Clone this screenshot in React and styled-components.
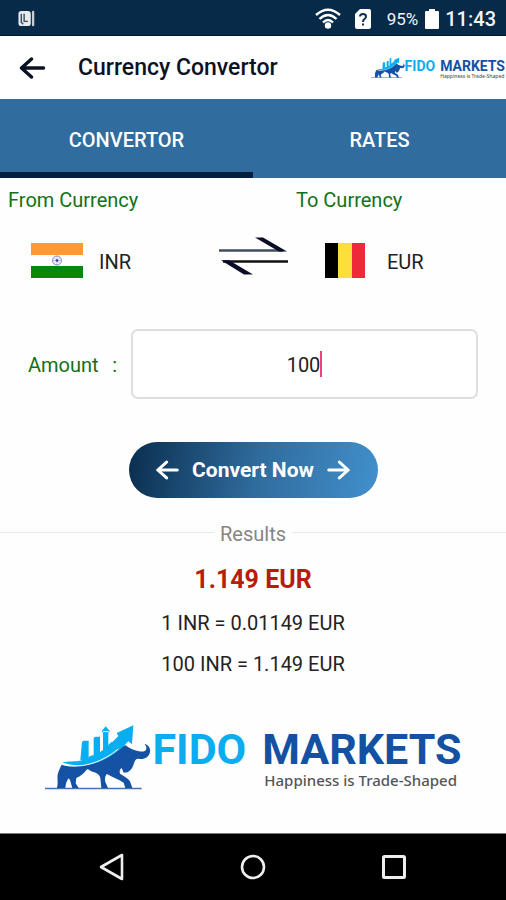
import React, { useState } from "react";
import styled, { createGlobalStyle } from "styled-components";

const GlobalStyle = createGlobalStyle`
  * {
    box-sizing: border-box;
  }

  body {
    margin: 0;
    background-color: #fefefe;
    font-family: Roboto, "Liberation Sans", sans-serif;
  }

  button {
    padding: 0;
    border: none;
    background: none;
    color: inherit;
    font: inherit;
    cursor: pointer;
  }
`;

const Screen = styled.div`
  display: flex;
  flex-direction: column;
  min-height: 100vh;
  background-color: #fefefe;
`;

const StatusBar = styled.div`
  display: flex;
  justify-content: space-between;
  align-items: center;
  height: 36px;
  padding: 2px 10px 0 17px;
  border-bottom: 1px solid #03182c;
  background-color: #062a48;
  color: #f2f5f7;
`;

const StatusIcons = styled.div`
  display: flex;
  align-items: center;
`;

const WifiIcon = styled.svg`
  margin-right: 14px;
`;

const SimIcon = styled.svg`
  margin-right: 16px;
`;

const BatteryLevel = styled.span`
  margin-right: 7px;
  font-size: 17px;
`;

const Clock = styled.span`
  margin-left: 6px;
  font-size: 20px;
  font-weight: 500;
`;

const Header = styled.header`
  display: flex;
  align-items: center;
  height: 63px;
  padding-left: 19px;
  background-color: white;
`;

const BackButton = styled.button`
  display: flex;
  margin-right: 32px;
`;

const Title = styled.h1`
  flex: 1;
  margin: 0;
  font-size: 23px;
  font-weight: 500;
  white-space: nowrap;
  color: #0c1226;
`;

const Tabs = styled.nav`
  display: flex;
  height: 79px;
  background-color: #306c9e;
`;

const Tab = styled.button`
  flex: 1;
  border-top: 8px solid transparent;
  border-bottom: 6px solid ${({ $active }) => ($active ? "#031f3b" : "transparent")};
  font-size: 20px;
  font-weight: 500;
  color: white;
`;

const Main = styled.main`
  flex: 1;
  display: flex;
  flex-direction: column;
`;

const Currencies = styled.section`
  display: grid;
  grid-template-columns: 1fr 70px 1fr;
  align-items: end;
  padding: 0 6px 0 8px;
`;

const Side = styled.div`
  padding-left: ${({ $indent }) => ($indent ? 7 : 0)}px;
`;

const SideLabel = styled.div`
  padding-top: 8px;
  font-size: 20px;
  line-height: 28px;
  color: #157015;
`;

const CurrencyButton = styled.button`
  display: flex;
  align-items: center;
  gap: 16px;
  height: 35px;
  margin-top: 29px;
  padding-left: 23px;
  font-size: 20px;
  color: #222;
`;

const CurrencyCode = styled.span`
  padding-top: 2px;
`;

const FlagBox = styled.span`
  display: flex;
  justify-content: center;
  width: 52px;
`;

const SwapButton = styled.button`
  display: flex;
  margin-bottom: 3px;
`;

const AmountRow = styled.div`
  display: flex;
  align-items: center;
  margin-top: 51px;
  padding: 0 28px;
`;

const AmountLabel = styled.label`
  display: flex;
  justify-content: space-between;
  width: 89px;
  margin-right: 14px;
  padding-top: 2px;
  font-size: 20px;
  color: #157015;
`;

const AmountField = styled.div`
  flex: 1;
  display: flex;
  justify-content: center;
  align-items: center;
  height: 70px;
  border: 2px solid #dedede;
  border-radius: 7px;
  background-color: white;
`;

const AmountInput = styled.input`
  width: ${({ $chars }) => $chars}ch;
  padding: 2px 0 0;
  border: none;
  outline: none;
  background: none;
  font-family: inherit;
  font-size: 20px;
  color: #222;
  caret-color: transparent;
`;

const Caret = styled.span`
  width: 2px;
  height: 26px;
  background-color: #f04080;
`;

const ConvertButton = styled.button`
  display: flex;
  align-items: center;
  justify-content: center;
  gap: 13px;
  align-self: center;
  width: 249px;
  height: 56px;
  margin-top: 43px;
  border-radius: 28px;
  background: linear-gradient(100deg, #0a2e4e 0%, #306c9e 52%, #4290cc 100%);
  font-size: 21px;
  font-weight: 700;
  color: white;
`;

const ResultsHeading = styled.h2`
  display: flex;
  align-items: center;
  gap: 6px;
  margin: 22px 0 0;
  font-size: 20px;
  font-weight: 400;
  line-height: 28px;
  color: #858585;

  &::before,
  &::after {
    content: "";
    flex: 1;
    height: 1px;
    margin-bottom: 4px;
    background-color: #e9e9e9;
  }
`;

const Total = styled.div`
  margin-top: 16px;
  font-size: 25px;
  font-weight: 700;
  line-height: 32px;
  text-align: center;
  color: #b91c08;
`;

const Rate = styled.p`
  margin: 13px 0 0;
  font-size: 20px;
  line-height: 28px;
  text-align: center;
  color: #222;
`;

const Brand = styled.div`
  display: flex;
  align-items: flex-start;
  gap: ${({ $small }) => ($small ? 0 : 2)}px;
  padding-right: ${({ $small }) => ($small ? 1 : 0)}px;
`;

const FooterBrand = styled.div`
  display: flex;
  justify-content: center;
  margin: 46px 0 39px;
`;

const BrandWords = styled.div`
  display: grid;
  grid-template-columns: auto auto;
  column-gap: ${({ $small }) => ($small ? 5 : 16)}px;
  padding-top: ${({ $small }) => ($small ? 2 : 4)}px;
  font-size: ${({ $small }) => ($small ? 14 : 43)}px;
  font-weight: 700;
  line-height: ${({ $small }) => ($small ? 14 : 43)}px;
`;

const Fido = styled.span`
  color: #0aaeee;
`;

const Markets = styled.span`
  color: #1451a3;
`;

const Tagline = styled.span`
  grid-column: 2;
  padding-left: ${({ $small }) => ($small ? 0 : 2)}px;
  font-family: "Noto Sans", "Liberation Sans", sans-serif;
  font-size: ${({ $small }) => ($small ? 5 : 15)}px;
  font-weight: 500;
  line-height: ${({ $small }) => ($small ? 6 : 18)}px;
  white-space: nowrap;
  color: #555;
`;

const NavBar = styled.nav`
  display: flex;
  justify-content: space-around;
  align-items: center;
  height: 67px;
  padding: 0 42px;
  border-top: 1px solid #777;
  background-color: black;
`;

const NavButton = styled.button`
  display: flex;
`;

const Bull = ({ width }) => (
  <svg width={width} viewBox="42 42 318 198" aria-hidden="true">
    <path d="M42 233h290v5H42z" fill="#4470b4" />
    <path
      d="M92 164C120 174 175 168 218 145C240 132 262 112 284 106C292 112 300 118 308 119C326 126 344 128 346 116C347 110 344 106 340 102C352 104 359 114 357 126C354 142 338 150 322 146C314 146 312 152 309 160C306 170 302 180 290 187L278 188L272 174C266 178 264 186 268 192C278 198 290 204 297 214L304 234H283L278 218C262 208 244 202 228 192C222 198 221 206 223 216L231 234H211L208 204C206 196 200 190 190 187C178 184 172 176 168 178C160 190 148 200 136 204L134 220L143 234H124L117 210L113 205C106 214 104 224 103 234H78C82 218 78 208 80 194C82 184 86 176 92 164Z"
      fill="#1552a4"
    />
    <path
      d="M94 157C110 154 134 156 153 151V96L158 92H173V144L188 139V84L193 80H207V131L216 124V68L212 64L224 49L237 64L232 68V109L262 78L257 69L307 46L303 103L292 94C266 124 226 152 184 162C150 169 116 167 94 157Z"
      fill="#08aef0"
    />
    <path d="M148 150L153 96V151L173 146V140L188 134V139L207 133V126L216 120V126L232 114V104L244 94V118L180 156Z" fill="#08aef0" />
    <path d="M110 167C164 174 218 153 262 117" fill="none" stroke="#fff" strokeWidth="3" />
    <path d="M216 65h17" stroke="#fff" strokeWidth="3" />
  </svg>
);

const Logo = ({ small }) => (
  <Brand $small={small}>
    <Bull width={small ? 34 : 106} />
    <BrandWords $small={small}>
      <Fido>FIDO</Fido>
      <Markets>MARKETS</Markets>
      <Tagline $small={small}>Happiness is Trade-Shaped</Tagline>
    </BrandWords>
  </Brand>
);

const Arrow = ({ width, height, color, right }) => (
  <svg width={width} height={height} viewBox="0 0 26 22" aria-hidden="true">
    <path
      d={right ? "M2 11H24M14 2L24 11L14 20" : "M24 11H2M12 2L2 11L12 20"}
      fill="none"
      stroke={color}
      strokeWidth="3.400"
      strokeLinecap="round"
      strokeLinejoin="round"
    />
  </svg>
);

const IndiaFlag = () => (
  <svg width="52" height="35" viewBox="0 0 52 35" aria-hidden="true">
    <path d="M0 0h52v35H0z" fill="#fff" />
    <path d="M0 0h52v12H0z" fill="#ff9933" />
    <path d="M0 23h52v12H0z" fill="#098709" />
    <circle cx="26" cy="17.500" r="4.500" fill="none" stroke="#8080c4" />
    <path d="M21.500 17.500h9M26 13v9M23 14.500l6 6M29 14.500l-6 6" stroke="#9a9ad0" strokeWidth="0.600" />
    <circle cx="26" cy="17.500" r="1.300" fill="#3a3a9c" />
  </svg>
);

const BelgiumFlag = () => (
  <svg width="40" height="35" viewBox="0 0 40 35" aria-hidden="true">
    <path d="M0 0h13v35H0z" fill="#000" />
    <path d="M13 0h14v35H13z" fill="#fddf3c" />
    <path d="M27 0h13v35H27z" fill="#ee2a3a" />
  </svg>
);

const App = () => {
  const [tab, setTab] = useState("CONVERTOR");
  const [amount, setAmount] = useState("100");

  return (
    <Screen>
      <GlobalStyle />
      <StatusBar>
        <svg width="19" height="17" viewBox="0 0 19 18" aria-hidden="true">
          <rect x="1" y="1" width="13" height="16" rx="3" fill="#e8ebee" />
          <path d="M4 4v9l2 2M7 4v8h4" fill="none" stroke="#344c60" strokeWidth="1.500" />
          <path d="M16.500 2v14" stroke="#c4ccd3" strokeWidth="2.500" strokeLinecap="round" />
        </svg>
        <StatusIcons>
          <WifiIcon width="26" height="21" viewBox="0 0 26 21" aria-hidden="true">
            <g fill="none" stroke="#fff" strokeWidth="2.400">
              <path d="M1 7Q13-3.500 25 7" />
              <path d="M4.500 11Q13 3 21.500 11" />
              <path d="M8 14.500Q13 9.500 18 14.500" />
            </g>
            <circle cx="13" cy="17.500" r="3.200" fill="#fff" />
          </WifiIcon>
          <SimIcon width="16" height="20" viewBox="0 0 16 20" aria-hidden="true">
            <path d="M5 0h9q2 0 2 2v16q0 2-2 2H2q-2 0-2-2V5z" fill="#fff" />
            <path d="M5 7.500q0-2.500 3-2.500t3 2.500q0 1.500-1.500 2.500T8 13M8 14.500v2" fill="none" stroke="#12304a" strokeWidth="2" />
          </SimIcon>
          <BatteryLevel>95%</BatteryLevel>
          <svg width="14" height="20" viewBox="0 0 14 20" aria-hidden="true">
            <path d="M4 0h6v2h3q1 0 1 1v16q0 1-1 1H1q-1 0-1-1V3q0-1 1-1h3z" fill="#fff" />
          </svg>
          <Clock>11:43</Clock>
        </StatusIcons>
      </StatusBar>

      <Header>
        <BackButton aria-label="Back">
          <Arrow width={27} height={22} color="#0c1226" />
        </BackButton>
        <Title>Currency Convertor</Title>
        <Logo small />
      </Header>

      <Tabs>
        {["CONVERTOR", "RATES"].map((name) => (
          <Tab key={name} $active={tab === name} onClick={() => setTab(name)}>
            {name}
          </Tab>
        ))}
      </Tabs>

      <Main>
        <Currencies>
          <Side>
            <SideLabel>From Currency</SideLabel>
            <CurrencyButton>
              <FlagBox>
                <IndiaFlag />
              </FlagBox>
              <CurrencyCode>INR</CurrencyCode>
            </CurrencyButton>
          </Side>
          <SwapButton aria-label="Swap currencies">
            <svg width="70" height="38" viewBox="0 0 70 38" aria-hidden="true">
              <path d="M0 13.500H64" stroke="#3f4c64" strokeWidth="2.600" />
              <path d="M36 0.500H44L68 14.500H60Z" fill="#0a0d28" />
              <path d="M4 24.500H69" stroke="#101010" strokeWidth="2.400" />
              <path d="M2 23.300H10L34 37.500H25Z" fill="#0a0d28" />
            </svg>
          </SwapButton>
          <Side $indent>
            <SideLabel>To Currency</SideLabel>
            <CurrencyButton>
              <FlagBox>
                <BelgiumFlag />
              </FlagBox>
              <CurrencyCode>EUR</CurrencyCode>
            </CurrencyButton>
          </Side>
        </Currencies>

        <AmountRow>
          <AmountLabel htmlFor="amount">
            <span>Amount</span>
            <span>:</span>
          </AmountLabel>
          <AmountField>
            <AmountInput
              id="amount"
              inputMode="decimal"
              value={amount}
              $chars={Math.max(amount.length, 1)}
              onChange={(e) => setAmount(e.target.value)}
            />
            <Caret />
          </AmountField>
        </AmountRow>

        <ConvertButton>
          <Arrow width={23} height={20} color="#fff" />
          Convert Now
          <Arrow width={23} height={20} color="#fff" right />
        </ConvertButton>

        <ResultsHeading>Results</ResultsHeading>
        <Total>1.149 EUR</Total>
        <Rate>1 INR = 0.01149 EUR</Rate>
        <Rate>100 INR = 1.149 EUR</Rate>

        <FooterBrand>
          <Logo />
        </FooterBrand>
      </Main>

      <NavBar>
        <NavButton aria-label="Back">
          <svg width="26" height="28" viewBox="0 0 26 28" aria-hidden="true">
            <path d="M23 2V26L2 14Z" fill="none" stroke="#eee" strokeWidth="2.600" strokeLinejoin="round" />
          </svg>
        </NavButton>
        <NavButton aria-label="Home">
          <svg width="26" height="26" viewBox="0 0 26 26" aria-hidden="true">
            <circle cx="13" cy="13" r="11" fill="none" stroke="#eee" strokeWidth="2.600" />
          </svg>
        </NavButton>
        <NavButton aria-label="Recent apps">
          <svg width="26" height="26" viewBox="0 0 26 26" aria-hidden="true">
            <rect x="2.500" y="2.500" width="21" height="21" rx="1" fill="none" stroke="#eee" strokeWidth="3" />
          </svg>
        </NavButton>
      </NavBar>
    </Screen>
  );
};

export default App;
